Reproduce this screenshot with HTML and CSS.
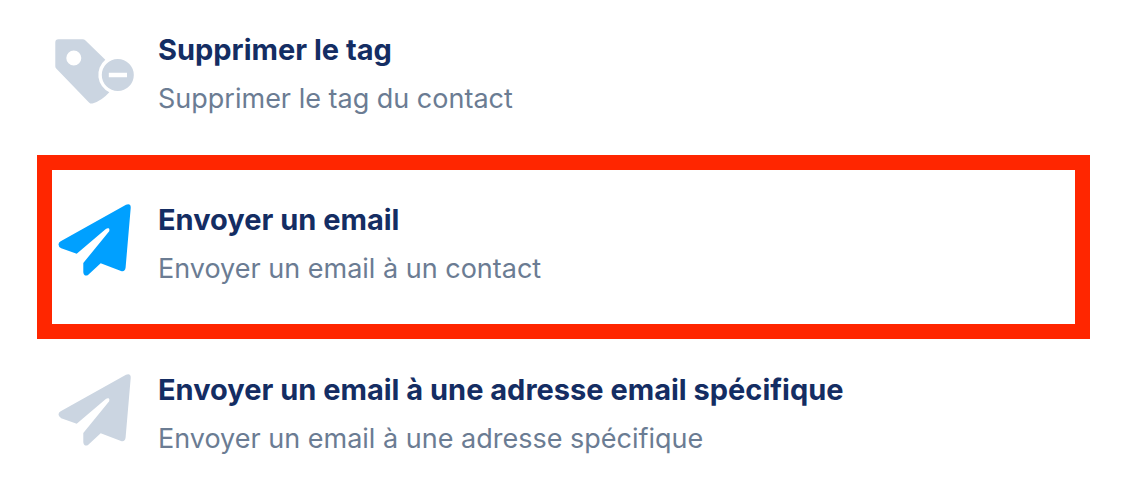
FILE: index.html
```html
<!DOCTYPE html>
<html lang="fr">
<head>
<meta charset="utf-8">
<title>Actions</title>
<link rel="stylesheet" href="styles.css">
</head>
<body>
<svg width="0" height="0" class="sprite" aria-hidden="true">
  <symbol id="plane" viewBox="0 0 88 89">
    <path d="M74 4.7Q79 3 78.7 8L73.6 67.5Q73 72.2 69 71.1L48.7 63.3L36.3 74.7Q33.8 76.6 32 74.4Q31.3 73.5 31.3 72V63L57.2 31.2Q57.8 28.8 56.6 28.3Q55.4 27.8 53.5 29.2L24.7 53.8L9.2 48.2Q6.4 46.8 6.5 44.3Q6.7 42.4 8.7 41.2Z"/>
  </symbol>
</svg>
<ul class="actions">
  <li class="action">
    <svg class="icon" viewBox="0 0 88 89" aria-hidden="true">
      <path fill-rule="evenodd" d="M6.5 9.3H30.5Q32.3 9.3 33.5 10.5L53.3 29.8A19.5 19.5 0 0 0 57.3 62.3Q50 70.5 41.2 73.3Q38.8 74.2 37 72.4L4.2 38.6Q3.3 37.6 3.3 36.2V12.5Q3.3 9.3 6.5 9.3ZM21.8 20.5a7.5 7.5 0 1 0 0 15a7.5 7.5 0 1 0 0-15Z"/>
      <path fill-rule="evenodd" d="M65.8 29a16 16 0 1 0 0 32a16 16 0 1 0 0-32ZM56.8 42.8H75V47.2H56.8Z"/>
    </svg>
    <div class="text">
      <h2 class="title">Supprimer le tag</h2>
      <p class="description">Supprimer le tag du contact</p>
    </div>
  </li>
  <li class="action selected">
    <svg class="icon" aria-hidden="true"><use href="#plane"/></svg>
    <div class="text">
      <h2 class="title">Envoyer un email</h2>
      <p class="description">Envoyer un email à un contact</p>
    </div>
  </li>
  <li class="action">
    <svg class="icon" aria-hidden="true"><use href="#plane"/></svg>
    <div class="text">
      <h2 class="title">Envoyer un email à une adresse email spécifique</h2>
      <p class="description">Envoyer un email à une adresse spécifique</p>
    </div>
  </li>
</ul>
</body>
</html>
```
FILE: styles.css
```css
body {
  margin: 0;
  background: #fff;
  font-family: Inter, "Open Sans", sans-serif;
}

.sprite {
  display: block;
}

.actions {
  margin: 0;
  padding: 0 48px 0 37px;
  list-style: none;
}

.action {
  display: flex;
  gap: 18px;
  padding: 30px 15px 36px;
}

.selected {
  padding: 30px 0 35px;
  border: 15px solid #ff2600;
}

.selected + .action {
  padding-top: 31px;
}

.icon {
  flex: none;
  width: 88px;
  height: 89px;
  fill: #cbd5e1;
}

.selected .icon {
  fill: #00a0ff;
}

.text {
  display: flex;
  flex-direction: column;
  gap: 9px;
}

.title,
.description {
  margin: 0;
  line-height: 40px;
}

.title {
  color: #142d63;
  font-size: 29px;
  font-weight: 700;
}

.description {
  color: #6b7c93;
  font-size: 27px;
}
```
